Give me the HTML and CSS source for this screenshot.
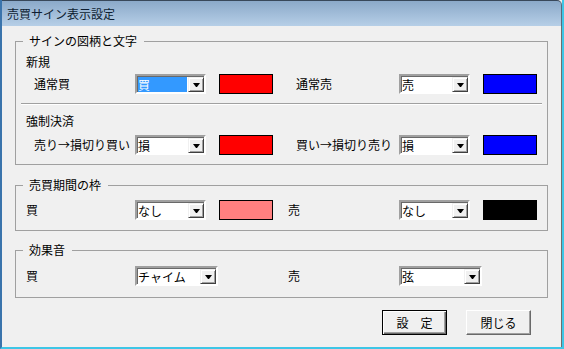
FILE: index.html
```html
<!DOCTYPE html>
<html lang="ja">
<head>
  <meta charset="UTF-8">
  <title>売買サイン表示設定</title>
  <link rel="stylesheet" href="styles.css">
</head>
<body>
  <div class="window">
    <div class="titlebar">売買サイン表示設定</div>
    <div class="content">

      <fieldset class="group group-sign">
        <legend>サインの図柄と文字</legend>
        <div class="subhead">新規</div>
        <div class="row indent">
          <span class="label">通常買</span>
          <div class="combo focus"><span class="value">買</span><span class="drop"></span></div>
          <span class="swatch red"></span>
          <span class="label label-r">通常売</span>
          <div class="combo"><span class="value">売</span><span class="drop"></span></div>
          <span class="swatch blue"></span>
        </div>
        <div class="sep"></div>
        <div class="subhead subhead-2">強制決済</div>
        <div class="row row-2 indent">
          <span class="label">売り→損切り買い</span>
          <div class="combo"><span class="value">損</span><span class="drop"></span></div>
          <span class="swatch red"></span>
          <span class="label label-r">買い→損切り売り</span>
          <div class="combo"><span class="value">損</span><span class="drop"></span></div>
          <span class="swatch blue"></span>
        </div>
      </fieldset>

      <fieldset class="group group-frame">
        <legend>売買期間の枠</legend>
        <div class="row">
          <span class="label">買</span>
          <div class="combo"><span class="value">なし</span><span class="drop"></span></div>
          <span class="swatch pink"></span>
          <span class="label label-r">売</span>
          <div class="combo"><span class="value">なし</span><span class="drop"></span></div>
          <span class="swatch black"></span>
        </div>
      </fieldset>

      <fieldset class="group group-sound">
        <legend>効果音</legend>
        <div class="row">
          <span class="label">買</span>
          <div class="combo wide"><span class="value">チャイム</span><span class="drop"></span></div>
          <span></span>
          <span class="label label-r">売</span>
          <div class="combo wide"><span class="value">弦</span><span class="drop"></span></div>
          <span></span>
        </div>
      </fieldset>

      <div class="buttons">
        <button class="btn default">設　定</button>
        <button class="btn">閉じる</button>
      </div>

    </div>
  </div>
</body>
</html>
```

FILE: styles.css
```css
body {
  margin: 0;
  padding: 0;
  font-family: "Noto Sans CJK JP", "Noto Sans", sans-serif;
  font-size: 12px;
  color: #000;
  background-color: #f0f0f0;
}
.window {
  width: 564px;
  height: 349px;
  box-sizing: border-box;
  border-left: 2px solid #3a74ac;
  border-right: 2px solid #3ec6e6;
  border-bottom: 2px solid #3ec6e6;
  display: flex;
  flex-direction: column;
}
.titlebar {
  height: 25px;
  line-height: 25px;
  border-top: 1px solid #38485a;
  border-right: 1px solid #5a6a7a;
  border-top-right-radius: 5px;
  padding-left: 5px;
  background: linear-gradient(#8ba9c9, #b6cfe7);
  color: #0e1e32;
}
.content {
  flex: 1;
  border-right: 1px solid #6e6e6e;
  background-color: #f0f0f0;
  padding: 8px 13px 0 13px;
  display: flex;
  flex-direction: column;
}

/* group boxes */
.group {
  margin: 0;
  padding: 0;
  min-inline-size: 0;
  border: 1px solid #a0a0a0;
}
.group legend {
  margin-left: 7px;
  padding: 0 7px 0 6px;
  line-height: 14px;
}
.group-sign {
  padding-top: 7px;
  padding-bottom: 9px;
}
.group-frame {
  margin-top: 13px;
  padding-top: 8px;
  padding-bottom: 10px;
}
.group-sound {
  margin-top: 12px;
  padding-top: 9px;
  padding-bottom: 11px;
}
.subhead {
  line-height: 14px;
  padding-left: 10px;
}
.subhead-2 {
  margin-top: 9px;
}
.sep {
  margin: 9px 5px 0 5px;
  border-top: 1px solid #a0a0a0;
  border-bottom: 1px solid #fff;
}

/* rows */
.row {
  display: grid;
  grid-template-columns: 119px 84px 54px 126px 84px 54px;
  align-items: center;
  height: 20px;
}
.indent {
  margin-top: 5px;
}
.row-2 {
  margin-top: 7px;
}
.label {
  padding-left: 10px;
  white-space: nowrap;
  line-height: 14px;
}
.label-r {
  padding-left: 15px;
}
.indent .label {
  padding-left: 18px;
}
.indent .label-r {
  padding-left: 23px;
}

/* combo box */
.combo {
  width: 71px;
  height: 20px;
  box-sizing: border-box;
  border: 2px solid;
  border-color: #a0a0a0 #fff #fff #a0a0a0;
  box-shadow: inset 1px 1px 0 #696969;
  background-color: #fff;
  display: flex;
}
.combo.wide {
  width: 83px;
}
.combo .value {
  flex: 1;
  margin-top: 1px;
  padding-left: 1px;
  line-height: 15px;
  white-space: nowrap;
  overflow: hidden;
}
.combo.focus .value {
  background-color: #3399ff;
  color: #fff;
  margin-left: 1px;
  padding-left: 0;
  margin-right: 1px;
}
.combo .drop {
  width: 16px;
  height: 15px;
  margin-top: 1px;
  box-sizing: border-box;
  background-color: #f0f0f0;
  border: 1px solid;
  border-color: #f0f0f0 #404040 #404040 #f0f0f0;
  box-shadow: inset 1px 1px 0 #fff, inset -1px -1px 0 #a0a0a0;
  display: flex;
  justify-content: center;
  align-items: center;
}
.combo .drop::after {
  content: "";
  width: 1px;
  border-left: 3px solid transparent;
  border-right: 3px solid transparent;
  border-top: 4px solid #000;
}

/* colour swatches */
.swatch {
  height: 20px;
  box-sizing: border-box;
  border: 1px solid #000;
}
.red {
  background-color: #ff0000;
}
.blue {
  background-color: #0000ff;
}
.pink {
  background-color: #ff8080;
}
.black {
  background-color: #000;
}

/* buttons */
.buttons {
  margin-top: 12px;
  padding-right: 17px;
  display: flex;
  justify-content: flex-end;
  gap: 19px;
}
.btn {
  width: 65px;
  height: 25px;
  padding: 0;
  font-family: inherit;
  font-size: 12px;
  color: #000;
  background-color: #f0f0f0;
  border: 1px solid;
  border-color: #fff #696969 #696969 #fff;
  box-shadow: inset -1px -1px 0 #a0a0a0;
}
.btn.default {
  border-color: #000;
  box-shadow: inset 1px 1px 0 #fff, inset -1px -1px 0 #696969, inset -2px -2px 0 #a0a0a0;
}
```
